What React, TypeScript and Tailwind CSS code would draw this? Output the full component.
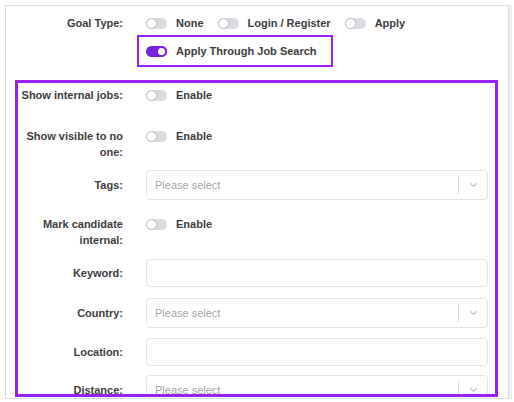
import type { ReactNode } from 'react'

function Toggle({ on = false }: { on?: boolean }) {
  return (
    <span
      className={`relative inline-flex h-[11px] w-[21px] shrink-0 items-center rounded-full ${
        on ? 'bg-[#7a21e0] justify-end' : 'bg-[#d8dbe0] justify-start'
      }`}
    >
      <span
        className={`h-[11px] w-[11px] rounded-full bg-white ${
          on ? 'border-[2px] border-[#7a21e0]' : 'border border-[#b9bdc4]'
        }`}
      />
    </span>
  )
}

function ToggleOption({ label, on = false }: { label: string; on?: boolean }) {
  return (
    <span className="inline-flex items-center gap-[9px]">
      <Toggle on={on} />
      <span className="font-bold text-[#3d3d3d]">{label}</span>
    </span>
  )
}

function Select({ placeholder = 'Please select' }: { placeholder?: string }) {
  return (
    <div className="flex h-[30px] w-full items-center rounded-[4px] border border-[#e4e4e4] bg-white">
      <span className="flex-1 pl-[8px] text-[#a3a3a3]">{placeholder}</span>
      <span className="h-[18px] w-px bg-[#dcdcdc]" />
      <span className="flex w-[28px] justify-center">
        <svg width="9" height="6" viewBox="0 0 9 6" fill="none">
          <path d="M1 1l3.5 3.5L8 1" stroke="#c4c4c4" strokeWidth="1.2" />
        </svg>
      </span>
    </div>
  )
}

function Input() {
  return <div className="h-[28px] w-full rounded-[4px] border border-[#e4e4e4] bg-white" />
}

function ToggleRow({ label, className = '' }: { label: ReactNode; className?: string }) {
  return (
    <div className={`flex items-start ${className}`}>
      <div className="w-[105px] shrink-0 text-right font-bold leading-[16px] text-[#3d3d3d]">{label}</div>
      <div className="ml-[23px] flex h-[16px] items-center">
        <ToggleOption label="Enable" />
      </div>
    </div>
  )
}

function FieldRow({ label, children, className = '' }: { label: string; children: ReactNode; className?: string }) {
  return (
    <div className={`flex items-center ${className}`}>
      <div className="w-[105px] shrink-0 text-right font-bold text-[#3d3d3d]">{label}</div>
      <div className="ml-[23px] flex-1">{children}</div>
    </div>
  )
}

export default function App() {
  return (
    <div
      className="h-[402px] w-[514px] overflow-hidden bg-white pl-[5px] pt-[5px] text-[11px]"
      style={{ fontFamily: '"Liberation Sans", Arial, sans-serif' }}
    >
      <div className="h-[394px] w-[504px] overflow-hidden border border-[#dcdcdc] shadow-[3px_0_0_#eeeeee]">
        {/* Goal type */}
        <div className="mt-[9px] flex h-[16px] items-center">
          <div className="w-[117px] shrink-0 text-right font-bold text-[#3d3d3d]">Goal Type:</div>
          <div className="ml-[23px] flex items-center gap-[14px]">
            <ToggleOption label="None" />
            <ToggleOption label="Login / Register" />
            <ToggleOption label="Apply" />
          </div>
        </div>
        <div className="ml-[131px] mt-[4px] flex h-[32px] w-fit items-center border-2 border-[#9b1ff7] pl-[7px] pr-[14px]">
          <ToggleOption label="Apply Through Job Search" on />
        </div>

        {/* Job search options */}
        <div className="ml-[9px] mt-[13px] h-[317px] w-[483px] overflow-hidden border-[3px] border-[#9b1ff7] pr-[7px]">
          <ToggleRow label="Show internal jobs:" className="mt-[4px]" />
          <ToggleRow label="Show visible to no one:" className="mt-[25px]" />
          <FieldRow label="Tags:" className="mt-[10px]">
            <Select />
          </FieldRow>
          <ToggleRow label="Mark candidate internal:" className="mt-[16px]" />
          <FieldRow label="Keyword:" className="mt-[11px]">
            <Input />
          </FieldRow>
          <FieldRow label="Country:" className="mt-[11px]">
            <Select />
          </FieldRow>
          <FieldRow label="Location:" className="mt-[10px]">
            <Input />
          </FieldRow>
          <FieldRow label="Distance:" className="mt-[9px]">
            <Select />
          </FieldRow>
        </div>
      </div>
    </div>
  )
}
